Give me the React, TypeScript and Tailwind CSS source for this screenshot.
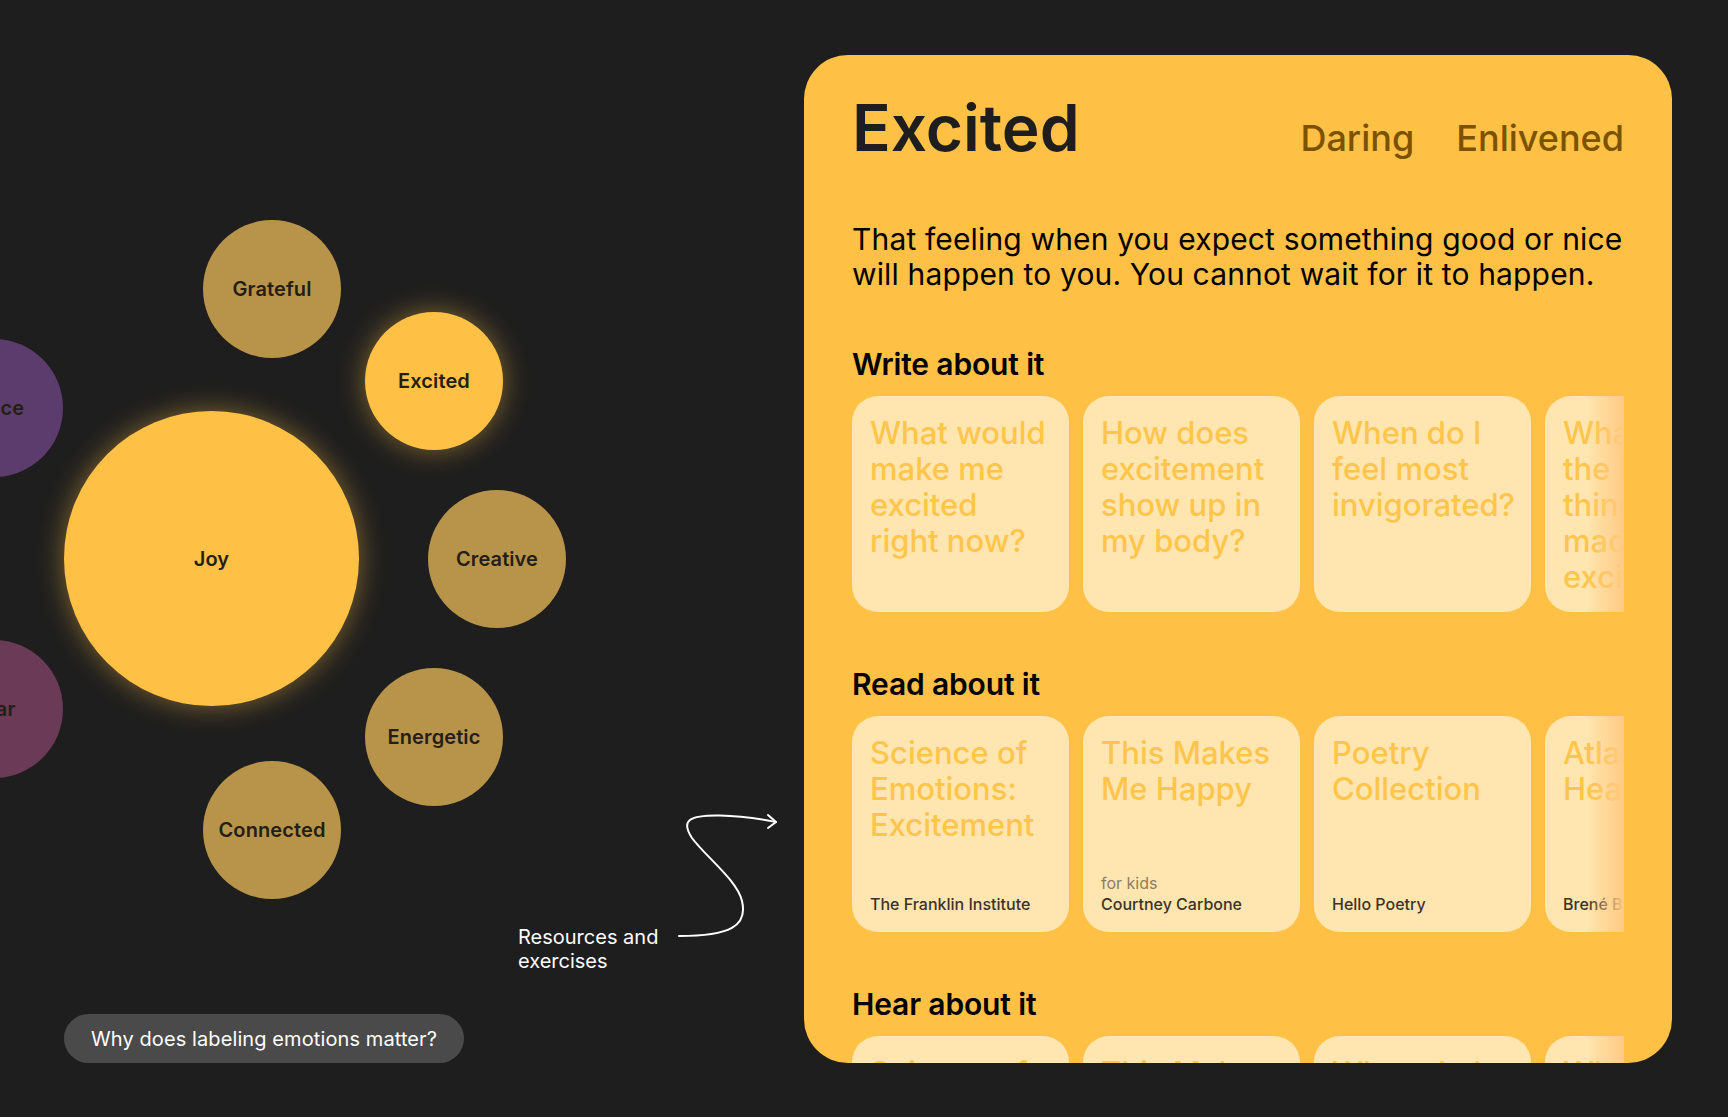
import React from 'react';

type Bubble = {
  label: string;
  pos: string;
  size: string;
  color: string;
  glow?: boolean;
};

const bubbles: Bubble[] = [
  { label: 'Peace', pos: 'left-[-75px] top-[339px]', size: 'w-[138px] h-[138px]', color: 'bg-[#5b3c6d]' },
  { label: 'Fear', pos: 'left-[-75px] top-[640px]', size: 'w-[138px] h-[138px]', color: 'bg-[#6a3a56]' },
  { label: 'Grateful', pos: 'left-[203px] top-[220px]', size: 'w-[138px] h-[138px]', color: 'bg-[#b8934a]' },
  { label: 'Excited', pos: 'left-[365px] top-[312px]', size: 'w-[138px] h-[138px]', color: 'bg-[#ffc145]', glow: true },
  { label: 'Joy', pos: 'left-[64px] top-[411px]', size: 'w-[295px] h-[295px]', color: 'bg-[#ffc145]', glow: true },
  { label: 'Creative', pos: 'left-[428px] top-[490px]', size: 'w-[138px] h-[138px]', color: 'bg-[#b8934a]' },
  { label: 'Energetic', pos: 'left-[365px] top-[668px]', size: 'w-[138px] h-[138px]', color: 'bg-[#b8934a]' },
  { label: 'Connected', pos: 'left-[203px] top-[761px]', size: 'w-[138px] h-[138px]', color: 'bg-[#b8934a]' },
];

const prompts = [
  'What would make me excited right now?',
  'How does excitement show up in my body?',
  'When do I feel most invigorated?',
  'What are the little things that made me excited?',
];

type Resource = { title: string; note?: string; by: string };

const reads: Resource[] = [
  { title: 'Science of Emotions: Excitement', by: 'The Franklin Institute' },
  { title: 'This Makes Me Happy', note: 'for kids', by: 'Courtney Carbone' },
  { title: 'Poetry Collection', by: 'Hello Poetry' },
  { title: 'Atlas of the Heart', by: 'Brené Brown' },
];

const hears: Resource[] = [
  { title: 'Science of Feelings', by: 'WNYC' },
  { title: 'This Makes Me Smile', by: 'Podcast' },
  { title: 'When do I feel alive?', by: 'Podcast' },
  { title: 'What makes us excited', by: 'Podcast' },
];

function CardRow({ children }: { children: React.ReactNode }) {
  return (
    <div className="relative mt-[15px] overflow-hidden">
      <div className="flex gap-[14px]">{children}</div>
      <div className="pointer-events-none absolute right-0 top-0 h-full w-[38px] bg-gradient-to-r from-transparent to-[#ffca84]" />
    </div>
  );
}

function Section({ title, children }: { title: string; children: React.ReactNode }) {
  return (
    <section className="mt-[55px]">
      <h2 className="text-[30px] leading-[34px] font-semibold tracking-[-0.005em] text-black">{title}</h2>
      <CardRow>{children}</CardRow>
    </section>
  );
}

function PromptCard({ text }: { text: string }) {
  return (
    <div className="h-[216px] w-[217px] shrink-0 rounded-[26px] bg-[#ffe6b0] px-[18px] pt-[19px]">
      <p className="text-[31px] leading-[36px] font-medium text-[#ffc54a]">{text}</p>
    </div>
  );
}

function ResourceCard({ item }: { item: Resource }) {
  return (
    <div className="flex h-[216px] w-[217px] shrink-0 flex-col justify-between rounded-[26px] bg-[#ffe6b0] px-[18px] pb-[17px] pt-[19px]">
      <p className="text-[31px] leading-[36px] font-medium text-[#ffc54a]">{item.title}</p>
      <div className="text-[16px] leading-[21px]">
        {item.note && <p className="text-[#8e7d5e]">{item.note}</p>}
        <p className="font-medium text-[#3b3328]">{item.by}</p>
      </div>
    </div>
  );
}

export default function App() {
  return (
    <div className="flex h-[1117px] w-full overflow-hidden bg-[#1e1e1e] font-['Inter',sans-serif]">
      <div className="flex w-[804px] shrink-0 flex-col pb-[54px]">
        <div className="relative flex-1">
          {bubbles.map((b) => (
            <div
              key={b.label}
              className={`absolute flex items-center justify-center rounded-full ${b.pos} ${b.size} ${b.color} ${
                b.glow ? 'shadow-[0_0_28px_rgba(255,193,69,0.45)]' : ''
              }`}
            >
              <span className="text-[20px] font-semibold tracking-[0.005em] text-[#231f16]">{b.label}</span>
            </div>
          ))}

          <p className="absolute left-[518px] top-[925px] text-[20px] leading-[24px] text-white">
            Resources and
            <br />
            exercises
          </p>
          <svg
            className="absolute left-[670px] top-[805px]"
            width="120"
            height="140"
            viewBox="670 805 120 140"
            fill="none"
            stroke="white"
            strokeWidth="2"
            strokeLinecap="round"
            strokeLinejoin="round"
          >
            <path d="M679 936 C730 936 748 926 742 901 C737 880 705 856 692 838 C680 820 690 815 720 815.5 C745 816 760 819 776 822" />
            <path d="M768 815 L776 822 L768 828" />
          </svg>
        </div>
        <button className="ml-[64px] h-[49px] w-fit rounded-full bg-[#4a4a4a] px-[27px] text-[20px] tracking-[0.005em] text-white">
          Why does labeling emotions matter?
        </button>
      </div>

      <div className="mt-[55px] h-[1008px] w-[868px] shrink-0 overflow-hidden rounded-[44px] bg-[#ffc145] px-[48px] pt-[41px]">
        <header className="flex items-baseline justify-between">
          <h1 className="text-[64px] leading-[64px] font-semibold text-[#1e1e1e]">Excited</h1>
          <div className="flex gap-[42px] text-[36px] font-medium text-[#7a5200]">
            <span>Daring</span>
            <span>Enlivened</span>
          </div>
        </header>

        <p className="mb-px mt-[57px] text-[30px] leading-[35px] tracking-[0.005em] text-black">
          That feeling when you expect something good or nice will happen to you. You cannot wait for it to happen.
        </p>

        <Section title="Write about it">
          {prompts.map((p) => (
            <PromptCard key={p} text={p} />
          ))}
        </Section>

        <Section title="Read about it">
          {reads.map((r) => (
            <ResourceCard key={r.title} item={r} />
          ))}
        </Section>

        <Section title="Hear about it">
          {hears.map((r) => (
            <ResourceCard key={r.title} item={r} />
          ))}
        </Section>
      </div>
    </div>
  );
}
